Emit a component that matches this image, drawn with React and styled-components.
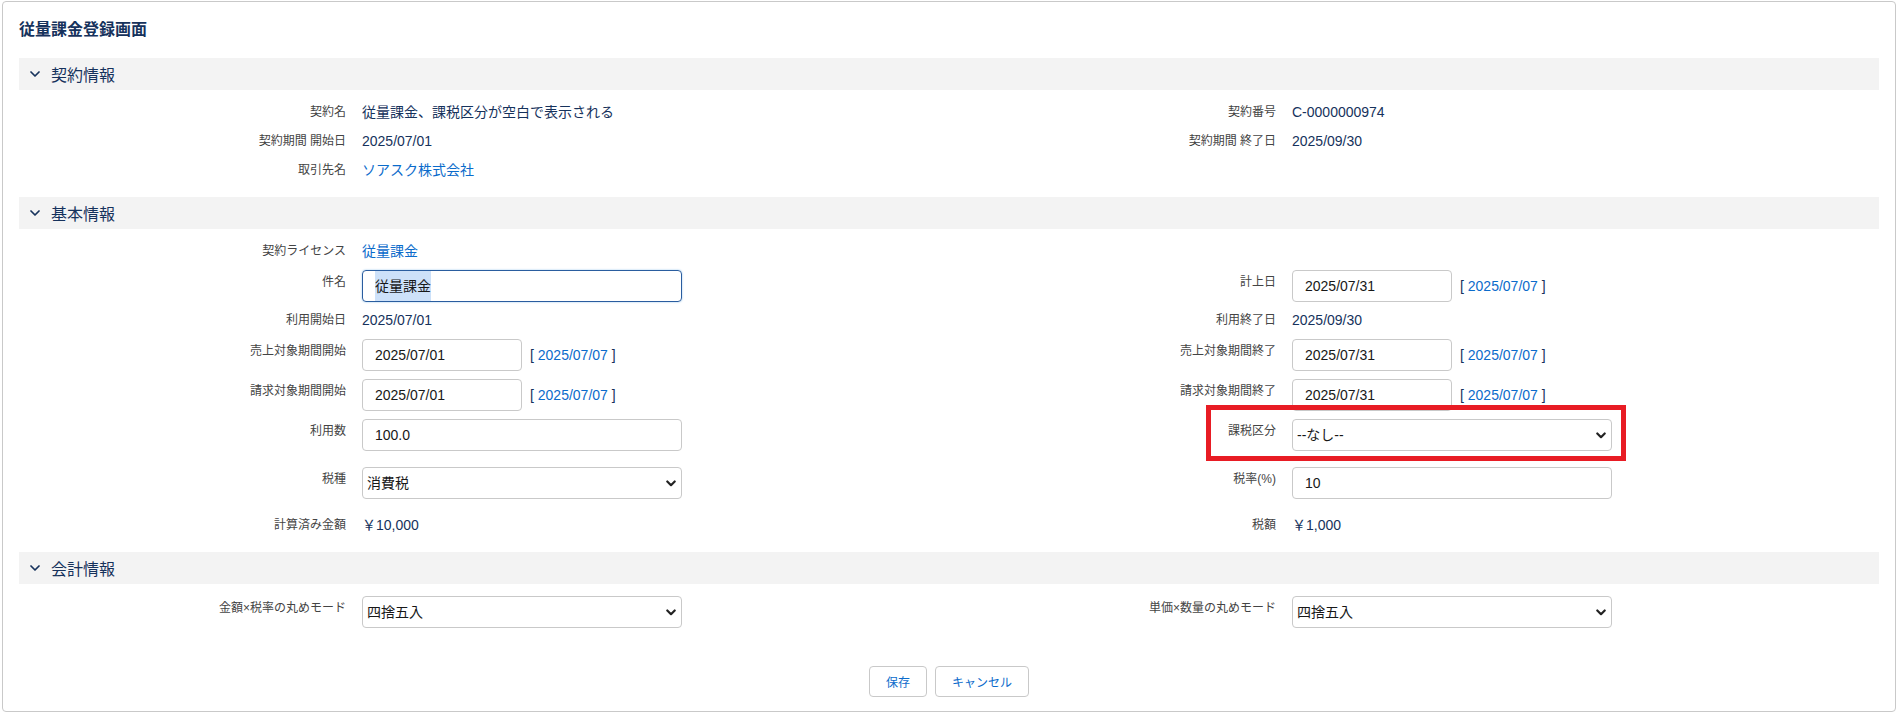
import React from "react";
import styled, { createGlobalStyle } from "styled-components";

const GlobalStyle = createGlobalStyle`
  html, body { margin: 0; padding: 0; background: #fff; }
  body {
    font-family: "Liberation Sans", "Noto Sans CJK JP", sans-serif;
    color: #181818;
  }
  * { box-sizing: border-box; }
`;

const NAVY = "#16325c";
const BLUE = "#0b6bcb";

const Page = styled.div`
  padding: 1px 2px 2px;
`;

const Card = styled.div`
  border: 1px solid #c9c9c9;
  border-radius: 4px;
  padding: 16px 16px 14px;
  background: #fff;
`;

const Title = styled.h1`
  margin: 0 0 16px;
  font-size: 16px;
  line-height: 24px;
  font-weight: 700;
  color: ${NAVY};
`;

const Section = styled.section`
  & + & { margin-top: 12px; }
`;

const SectionHeader = styled.div`
  height: 32px;
  background: #f3f3f3;
  display: flex;
  align-items: center;
  gap: 11px;
  padding-left: 11px;
  font-size: 16px;
  color: ${NAVY};
`;

const SectionBody = styled.div`
  padding-top: 8px;
`;

const Row = styled.div`
  display: grid;
  grid-template-columns: 1fr 1fr;
  padding: ${(p) => p.$pad}px 0;
`;

const Field = styled.div`
  position: relative;
  display: grid;
  grid-template-columns: 327px 1fr;
  column-gap: 16px;
  align-items: start;
`;

const Label = styled.div`
  font-size: 12px;
  line-height: 21px;
  color: #444;
  text-align: right;
  padding-top: ${(p) => (p.$control ? 2 : 0)}px;
  white-space: nowrap;
`;

const Value = styled.div`
  font-size: 14px;
  line-height: 21px;
  color: ${(p) => (p.$link ? BLUE : NAVY)};
`;

const ControlLine = styled.div`
  display: flex;
  align-items: center;
  gap: 8px;
  height: 32px;
`;

const TextInput = styled.input`
  width: ${(p) => p.$w}px;
  height: 32px;
  border: 1px solid #c9c9c9;
  border-radius: 4px;
  padding: 0 12px;
  font-family: inherit;
  font-size: 14px;
  color: #181818;
  background: #fff;
  outline: none;
`;

const FocusedInput = styled.div`
  width: ${(p) => p.$w}px;
  height: 32px;
  border: 1px solid #2a5d9f;
  border-radius: 4px;
  box-shadow: 0 0 2px rgba(1, 118, 211, 0.45);
  padding: 0 12px;
  display: flex;
  align-items: center;
  font-size: 14px;
  color: #181818;
`;

const Selected = styled.span`
  background: #cde1f9;
  line-height: 30px;
`;

const SelectBox = styled.div`
  position: relative;
  width: ${(p) => p.$w}px;
  height: 32px;
`;

const NativeSelect = styled.select`
  appearance: none;
  -webkit-appearance: none;
  width: 100%;
  height: 32px;
  border: 1px solid #c9c9c9;
  border-radius: 4px;
  padding: 0 24px 0 4px;
  font-family: inherit;
  font-size: 14px;
  color: #181818;
  background: #fff;
  outline: none;
`;

const SelectArrow = styled.svg`
  position: absolute;
  right: 6px;
  top: 13px;
  pointer-events: none;
`;

const DateLink = styled.span`
  font-size: 14px;
  color: ${NAVY};
  white-space: nowrap;
  a { color: ${BLUE}; text-decoration: none; }
`;

const Highlight = styled.div`
  position: absolute;
  left: 257px;
  top: -14px;
  width: 420px;
  height: 56px;
  border: 5px solid #e81c24;
  pointer-events: none;
`;

const ButtonBar = styled.div`
  display: flex;
  justify-content: center;
  gap: 8px;
  margin-top: 34px;
`;

const Button = styled.button`
  height: 31px;
  padding: 0 16px;
  border: 1px solid #c9c9c9;
  border-radius: 4px;
  background: #fff;
  color: ${BLUE};
  font-family: inherit;
  font-size: 12px;
  cursor: pointer;
`;

const Chevron = () => (
  <svg width="10" height="6" viewBox="0 0 10 6">
    <path d="M1 1 L5 5 L9 1" fill="none" stroke={NAVY} strokeWidth="1.7" strokeLinecap="round" strokeLinejoin="round" />
  </svg>
);

const Select = ({ w = 320, value }) => (
  <SelectBox $w={w}>
    <NativeSelect defaultValue={value}>
      <option value={value}>{value}</option>
    </NativeSelect>
    <SelectArrow width="10" height="7" viewBox="0 0 10 7">
      <path d="M1.3 1.5 L5 5.2 L8.7 1.5" fill="none" stroke="#222" strokeWidth="2.2" strokeLinecap="round" strokeLinejoin="round" />
    </SelectArrow>
  </SelectBox>
);

const TextField = ({ label, value, link }) => (
  <Field>
    <Label>{label}</Label>
    <Value $link={link}>{value}</Value>
  </Field>
);

const ControlField = ({ label, children, highlight }) => (
  <Field>
    <Label $control>{label}</Label>
    <ControlLine>{children}</ControlLine>
    {highlight && <Highlight />}
  </Field>
);

const Empty = () => <Field />;

const DateWithLink = ({ value }) => (
  <>
    <TextInput $w={160} defaultValue={value} />
    <DateLink>
      [ <a href="#">2025/07/07</a> ]
    </DateLink>
  </>
);

const SectionBlock = ({ title, children }) => (
  <Section>
    <SectionHeader>
      <Chevron />
      <span>{title}</span>
    </SectionHeader>
    <SectionBody>{children}</SectionBody>
  </Section>
);

export default function App() {
  return (
    <>
      <GlobalStyle />
      <Page>
        <Card>
          <Title>従量課金登録画面</Title>

          <SectionBlock title="契約情報">
            <Row $pad={4}>
              <TextField label="契約名" value="従量課金、課税区分が空白で表示される" />
              <TextField label="契約番号" value="C-0000000974" />
            </Row>
            <Row $pad={4}>
              <TextField label="契約期間 開始日" value="2025/07/01" />
              <TextField label="契約期間 終了日" value="2025/09/30" />
            </Row>
            <Row $pad={4}>
              <TextField label="取引先名" value="ソアスク株式会社" link />
              <Empty />
            </Row>
          </SectionBlock>

          <SectionBlock title="基本情報">
            <Row $pad={4}>
              <TextField label="契約ライセンス" value="従量課金" link />
              <Empty />
            </Row>
            <Row $pad={4}>
              <ControlField label="件名">
                <FocusedInput $w={320}>
                  <Selected>従量課金</Selected>
                </FocusedInput>
              </ControlField>
              <ControlField label="計上日">
                <DateWithLink value="2025/07/31" />
              </ControlField>
            </Row>
            <Row $pad={4}>
              <TextField label="利用開始日" value="2025/07/01" />
              <TextField label="利用終了日" value="2025/09/30" />
            </Row>
            <Row $pad={4}>
              <ControlField label="売上対象期間開始">
                <DateWithLink value="2025/07/01" />
              </ControlField>
              <ControlField label="売上対象期間終了">
                <DateWithLink value="2025/07/31" />
              </ControlField>
            </Row>
            <Row $pad={4}>
              <ControlField label="請求対象期間開始">
                <DateWithLink value="2025/07/01" />
              </ControlField>
              <ControlField label="請求対象期間終了">
                <DateWithLink value="2025/07/31" />
              </ControlField>
            </Row>
            <Row $pad={4}>
              <ControlField label="利用数">
                <TextInput $w={320} defaultValue="100.0" />
              </ControlField>
              <ControlField label="課税区分" highlight>
                <Select value="--なし--" />
              </ControlField>
            </Row>
            <Row $pad={12}>
              <ControlField label="税種">
                <Select value="消費税" />
              </ControlField>
              <ControlField label="税率(%)">
                <TextInput $w={320} defaultValue="10" />
              </ControlField>
            </Row>
            <Row $pad={4}>
              <TextField label="計算済み金額" value="￥10,000" />
              <TextField label="税額" value="￥1,000" />
            </Row>
          </SectionBlock>

          <SectionBlock title="会計情報">
            <Row $pad={4}>
              <ControlField label="金額×税率の丸めモード">
                <Select value="四捨五入" />
              </ControlField>
              <ControlField label="単価×数量の丸めモード">
                <Select value="四捨五入" />
              </ControlField>
            </Row>
          </SectionBlock>

          <ButtonBar>
            <Button>保存</Button>
            <Button>キャンセル</Button>
          </ButtonBar>
        </Card>
      </Page>
    </>
  );
}
